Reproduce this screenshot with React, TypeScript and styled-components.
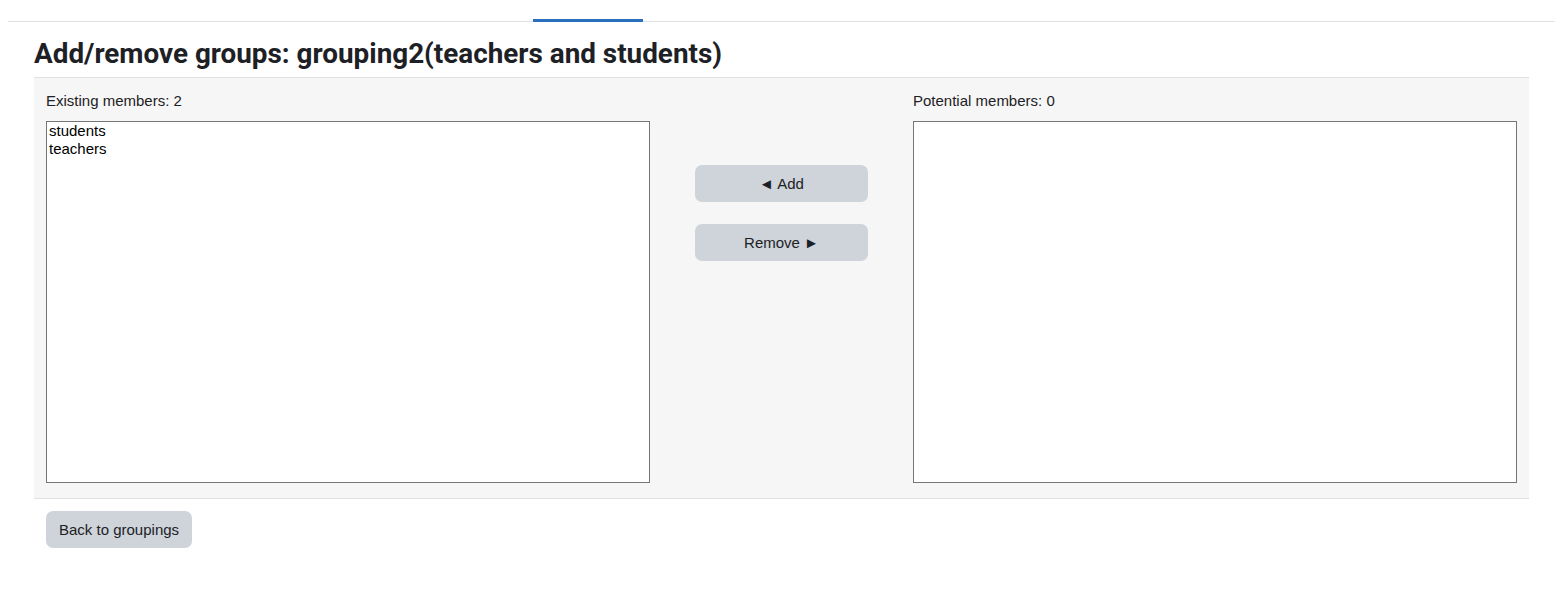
import React from "react";
import styled, { createGlobalStyle } from "styled-components";

const GlobalStyle = createGlobalStyle`
  body {
    margin: 0;
    background: #fff;
    font-family: "Liberation Sans", Arial, sans-serif;
    color: #1d2125;
  }
`;

const Page = styled.div`
  padding: 0 0 0 8px;
`;

const Nav = styled.div`
  height: 21px;
  border-bottom: 1px solid #dee2e6;
  display: flex;
  padding-left: 525px;
`;

const NavTab = styled.div<{ $active?: boolean }>`
  width: 110px;
  align-self: flex-end;
  height: 3px;
  margin-bottom: -1px;
  background: ${({ $active }) => ($active ? "#2a6ebf" : "transparent")};
`;

const Main = styled.div`
  width: 1495px;
  margin-left: 26px;
`;

const Heading = styled.h2`
  font-family: Roboto, "Liberation Sans", sans-serif;
  font-size: 27.85px;
  font-weight: 700;
  line-height: 1.2;
  margin: 0;
  padding: 15px 0 7px;
  border-bottom: 1px solid #dee2e6;
`;

const Table = styled.div`
  background: #f6f6f6;
  display: grid;
  grid-template-columns: 604px 1fr 604px;
  padding: 12px 12px 15px;
  border-bottom: 1px solid #dee2e6;
`;

const Column = styled.div`
  display: flex;
  flex-direction: column;
`;

const Label = styled.label`
  font-size: 15px;
  line-height: 22px;
  margin-bottom: 9px;
`;

const MemberList = styled.select`
  height: 362px;
  box-sizing: border-box;
  border: 1px solid #767676;
  border-radius: 0;
  background: #fff;
  font-family: "Liberation Sans", Arial, sans-serif;
  font-size: 15px;
  color: #000;
  padding: 0 1px;
  margin: 0;
  outline: none;

  option {
    padding: 0 1px;
    line-height: 18px;
  }
`;

const Actions = styled.div`
  display: flex;
  flex-direction: column;
  align-items: center;
  gap: 22px;
  padding-top: 75px;
`;

const Button = styled.button<{ $wide?: boolean }>`
  width: ${({ $wide }) => ($wide ? "173px" : "auto")};
  height: 37px;
  padding: 0 13px;
  border: none;
  border-radius: 7px;
  background: #ced4da;
  color: #1d2125;
  font-family: "Liberation Sans", Arial, sans-serif;
  font-size: 15px;
  cursor: pointer;
`;

const Footer = styled.div`
  padding: 12px 12px;
`;

export default function App() {
  return (
    <>
      <GlobalStyle />
      <Page>
        <Nav>
          <NavTab $active />
        </Nav>
        <Main>
          <Heading>Add/remove groups: grouping2(teachers and students)</Heading>
          <Table>
            <Column>
              <Label>Existing members: 2</Label>
              <MemberList multiple size={20}>
                <option>students</option>
                <option>teachers</option>
              </MemberList>
            </Column>
            <Actions>
              <Button $wide>◄ Add</Button>
              <Button $wide>Remove ►</Button>
            </Actions>
            <Column>
              <Label>Potential members: 0</Label>
              <MemberList multiple size={20} />
            </Column>
          </Table>
          <Footer>
            <Button>Back to groupings</Button>
          </Footer>
        </Main>
      </Page>
    </>
  );
}
